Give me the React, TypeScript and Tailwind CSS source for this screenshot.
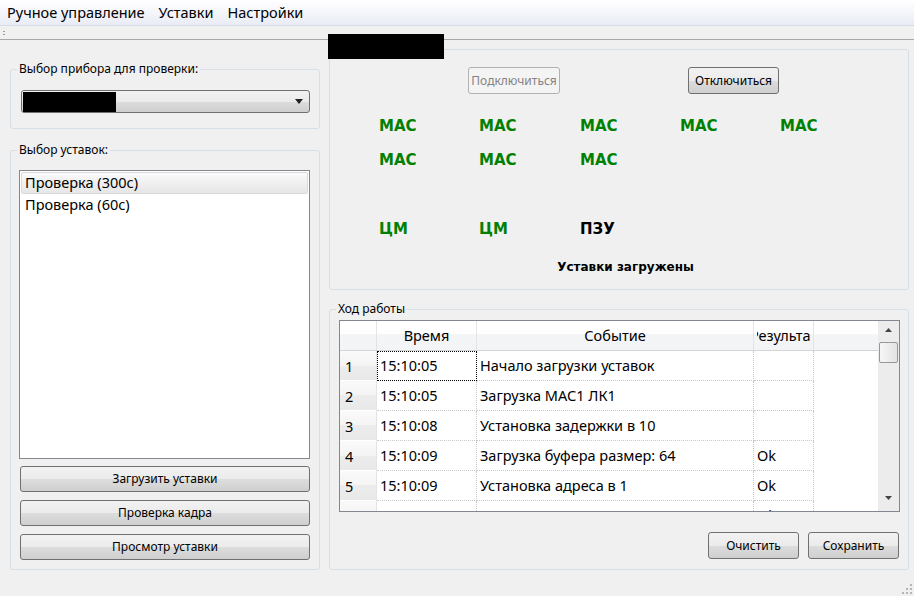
import React from 'react';

const btnBase =
  'flex items-center rounded-[3px] border border-[#707070] bg-[linear-gradient(#f2f2f2_0%,#ebebeb_50%,#dddddd_50%,#cfcfcf_100%)] text-[12px] text-black';
const btn = `${btnBase} justify-center`;

const rows = [
  { n: 1, time: '15:10:05', event: 'Начало загрузки уставок', res: '' },
  { n: 2, time: '15:10:05', event: 'Загрузка МАС1 ЛК1', res: '' },
  { n: 3, time: '15:10:08', event: 'Установка задержки в 10', res: '' },
  { n: 4, time: '15:10:09', event: 'Загрузка буфера размер: 64', res: 'Ok' },
  { n: 5, time: '15:10:09', event: 'Установка адреса в 1', res: 'Ok' },
  { n: 6, time: '15:10:09', event: 'Установка номера канала 0', res: 'Ok' },
];

function Group({ title, className, children }: { title: React.ReactNode; className: string; children: React.ReactNode }) {
  return (
    <fieldset className={`rounded-[3px] border border-[#d5dfe5] ${className}`}>
      {title}
      {children}
    </fieldset>
  );
}

function Label({ text }: { text: string }) {
  return <legend className="ml-[6px] px-[2px] text-[12px] leading-[14px] text-black">{text}</legend>;
}

function Status({ text, ok = true }: { text: string; ok?: boolean }) {
  return (
    <div
      className={`h-[34px] leading-[34px] font-['DejaVu_Sans',sans-serif] text-[15px] font-bold ${ok ? 'text-[#008000]' : 'text-black'}`}
    >
      {text}
    </div>
  );
}

function LogTable() {
  return (
    <div className="ml-[9px] mt-[4px] flex h-[192px] w-[561px] border border-[#828790] bg-white">
      <div className="w-[538px] overflow-hidden text-[14.5px]">
        {/* header */}
        <div className="flex h-[30px] border-b border-[#d5d5d5] bg-[linear-gradient(#ffffff_0%,#ffffff_45%,#f4f5f7_45%,#f3f4f6_100%)]">
          <div className="w-[37px] border-r border-[#e3e4e6]" />
          <div className="flex w-[100px] items-center justify-center border-r border-[#e3e4e6]">Время</div>
          <div className="flex w-[277px] items-center justify-center border-r border-[#e3e4e6]">Событие</div>
          <div className="w-[60px] border-r border-[#e3e4e6] px-[3px]">
            <div className="flex h-full items-center justify-center overflow-hidden whitespace-nowrap">Результат</div>
          </div>
        </div>
        {rows.map((r) => (
          <div key={r.n} className="flex h-[30px] leading-[28px]">
            <div className="flex w-[37px] items-center border-b border-r border-b-[#ffffff] border-r-[#e3e4e6] bg-[linear-gradient(#fafafa_0%,#f4f4f4_50%,#ececec_50%,#e9e9e9_100%)] pl-[5px]">
              {r.n}
            </div>
            <div
              className={`w-[100px] border-b border-r border-dotted border-[#c8c8c8] pl-[3px] ${
                r.n === 1 ? 'outline-1 -outline-offset-1 outline-dotted outline-black' : ''
              }`}
            >
              {r.time}
            </div>
            <div className="w-[277px] border-b border-r border-dotted border-[#c8c8c8] pl-[3px] whitespace-nowrap">
              {r.event}
            </div>
            <div className="w-[60px] border-b border-r border-dotted border-[#c8c8c8] pl-[3px]">{r.res}</div>
            <div className="w-[64px]" />
          </div>
        ))}
      </div>
      {/* scrollbar */}
      <div className="flex w-[21px] flex-col items-center bg-[#ececec] pt-[6px]">
        <svg width="9" height="6" viewBox="0 0 9 6">
          <path d="M4.5 1 L8 5 L1 5 Z" fill="#444" />
        </svg>
        <div className="mt-[9px] h-[21px] w-[19px] rounded-[2px] border border-[#979797] bg-[linear-gradient(90deg,#f6f6f6,#e3e3e3)]" />
        <div className="flex-1" />
        <svg width="9" height="6" viewBox="0 0 9 6" className="mb-[10px]">
          <path d="M1 1 L8 1 L4.5 5 Z" fill="#444" />
        </svg>
      </div>
    </div>
  );
}

export default function App() {
  return (
    <div className="relative flex h-[596px] w-[914px] flex-col overflow-hidden bg-[#f0f0f0] font-['Noto_Sans',sans-serif] text-black">
      {/* menu bar */}
      <div className="flex h-[26px] items-center gap-[14px] border-b border-[#d8dce6] bg-[linear-gradient(#ffffff,#e9ecf5)] pl-[7px] text-[14.5px]">
        <span>Ручное управление</span>
        <span>Уставки</span>
        <span>Настройки</span>
      </div>
      {/* toolbar */}
      <div className="flex h-[14px] flex-col justify-center gap-[2px] border-b border-[#a8a8a8] pl-[3px]">
        <div className="h-[1px] w-[2px] bg-[#9a9a9a]" />
        <div className="h-[1px] w-[2px] bg-[#9a9a9a]" />
      </div>

      <div className="flex gap-[9px] pl-[10px]">
        {/* left column */}
        <div className="flex w-[310px] flex-col">
          <Group title={<Label text="Выбор прибора для проверки:" />} className="mt-[22px] h-[67px]">
            <div className={`${btnBase} ml-[10px] mr-[9px] mt-[14px] h-[23px] justify-between pl-[1px] pr-[6px]`}>
              <div className="h-[20px] w-[93px] bg-black" />
              <svg width="8" height="5" viewBox="0 0 8 5">
                <path d="M0 0 L8 0 L4 5 Z" fill="#222" />
              </svg>
            </div>
          </Group>

          <Group title={<Label text="Выбор уставок:" />} className="mt-[14px] h-[427px]">
            <div className="ml-[8px] mr-[9px] mt-[13px] h-[289px] border border-[#828790] bg-white p-[1px] text-[14.5px]">
              <div className="flex h-[22px] items-center rounded-[2px] border border-[#dadada] bg-[linear-gradient(#fafafa,#e6e6e6)] pl-[3px]">
                Проверка (300с)
              </div>
              <div className="flex h-[22px] items-center pl-[4px]">Проверка (60с)</div>
            </div>
            <div className="ml-[9px] mr-[9px] mt-[7px] flex flex-col gap-[8px]">
              <div className={`${btn} h-[26px]`}>Загрузить уставки</div>
              <div className={`${btn} h-[26px]`}>Проверка кадра</div>
              <div className={`${btn} h-[26px]`}>Просмотр уставки</div>
            </div>
          </Group>
        </div>

        {/* right column */}
        <div className="flex w-[580px] flex-col">
          <Group
            title={
              <legend className="ml-0 px-0">
                <div className="relative h-[14px] w-[114px]">
                  <div className="absolute -left-[2px] -top-[8px] h-[25px] w-[116px] bg-black" />
                </div>
              </legend>
            }
            className="mt-[2px] h-[248px]"
          >
            <div className="mt-[11px] flex">
              <div className="ml-[138px] flex h-[27px] w-[92px] items-center justify-center rounded-[3px] border border-[#adb2b5] bg-[#f4f4f4] text-[12px] text-[#838383]">
                Подключиться
              </div>
              <div className={`${btn} ml-[128px] h-[27px] w-[91px]`}>Отключиться</div>
            </div>
            <div className="ml-[49px] mt-[15px] grid grid-cols-[100px_101px_100px_100px_100px]">
              <Status text="МАС" />
              <Status text="МАС" />
              <Status text="МАС" />
              <Status text="МАС" />
              <Status text="МАС" />
              <Status text="МАС" />
              <Status text="МАС" />
              <Status text="МАС" />
            </div>
            <div className="ml-[49px] mt-[35px] grid grid-cols-[100px_101px_100px]">
              <Status text="ЦМ" />
              <Status text="ЦМ" />
              <Status text="ПЗУ" ok={false} />
            </div>
            <div className="mt-[11px] flex h-[20px] items-center justify-center pl-[13px] font-['DejaVu_Sans',sans-serif] text-[12px] font-bold">
              Уставки загружены
            </div>
          </Group>

          <Group title={<Label text="Ход работы" />} className="mt-[12px] h-[268px]">
            <LogTable />
            <div className="mr-[9px] mt-[20px] flex justify-end gap-[9px]">
              <div className={`${btn} h-[27px] w-[91px]`}>Очистить</div>
              <div className={`${btn} h-[27px] w-[91px]`}>Сохранить</div>
            </div>
          </Group>
        </div>
      </div>

      {/* size grip */}
      <svg width="12" height="12" viewBox="0 0 12 12" className="absolute bottom-[2px] right-[2px]">
        {[
          [10, 2],
          [10, 6],
          [6, 6],
          [10, 10],
          [6, 10],
          [2, 10],
        ].map(([x, y]) => (
          <rect key={`${x}-${y}`} x={x} y={y} width="2" height="2" fill="#b5b5b5" />
        ))}
      </svg>
    </div>
  );
}
